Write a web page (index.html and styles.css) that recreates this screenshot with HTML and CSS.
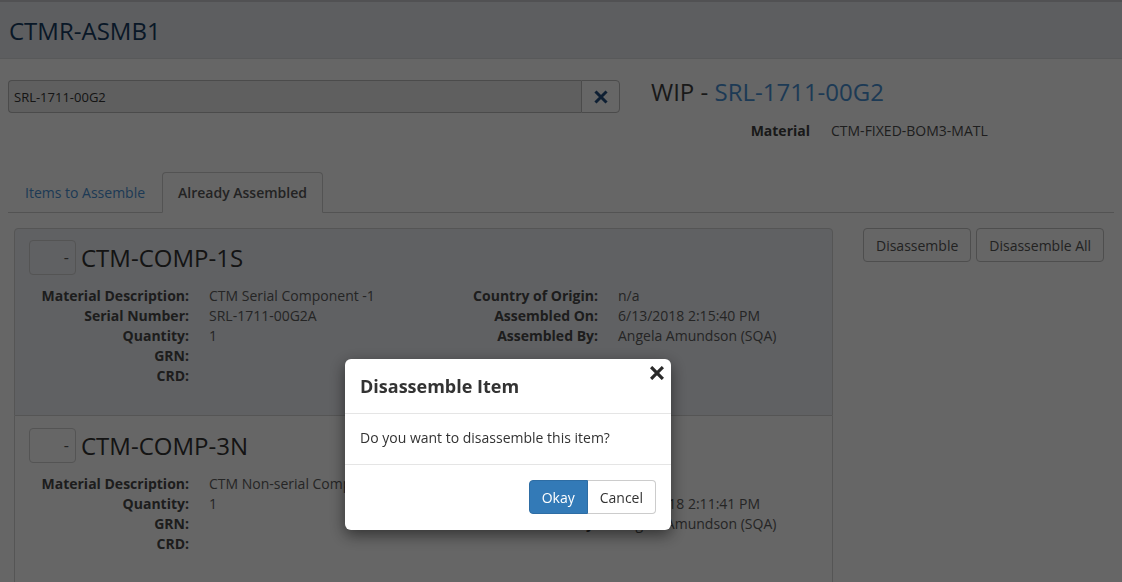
FILE: index.html
```html
<!DOCTYPE html>
<html>
<head>
<meta charset="utf-8">
<title>CTMR-ASMB1</title>
<link rel="stylesheet" href="styles.css">
</head>
<body>
<header class="app-header">
  <h1 class="app-title">CTMR-ASMB1</h1>
</header>
<main class="page">
  <section class="top-row">
    <div class="search-group">
      <input class="search-input" type="text" value="SRL-1711-00G2" readonly>
      <button class="search-clear" type="button" aria-label="Clear">
        <svg width="14" height="14" viewBox="0 0 14 14"><path d="M2.5 2.5 L11.5 11.5 M11.5 2.5 L2.5 11.5" stroke="currentColor" stroke-width="3" stroke-linecap="square"/></svg>
      </button>
    </div>
    <div class="wip">
      <h2 class="wip-title">WIP - <a class="link">SRL-1711-00G2</a></h2>
      <dl class="wip-meta">
        <dt>Material</dt>
        <dd>CTM-FIXED-BOM3-MATL</dd>
      </dl>
    </div>
  </section>

  <nav class="tabs">
    <a class="tab">Items to Assemble</a>
    <a class="tab active">Already Assembled</a>
  </nav>

  <section class="tab-body">
    <div class="cards">
      <article class="card selected">
        <div class="card-head">
          <span class="pick">-</span>
          <h3 class="card-title">CTM-COMP-1S</h3>
        </div>
        <div class="fields">
          <dl class="dl">
            <dt>Material Description:</dt><dd>CTM Serial Component -1</dd>
            <dt>Serial Number:</dt><dd>SRL-1711-00G2A</dd>
            <dt>Quantity:</dt><dd>1</dd>
            <dt>GRN:</dt><dd></dd>
            <dt>CRD:</dt><dd></dd>
          </dl>
          <dl class="dl">
            <dt>Country of Origin:</dt><dd>n/a</dd>
            <dt>Assembled On:</dt><dd>6/13/2018 2:15:40 PM</dd>
            <dt>Assembled By:</dt><dd>Angela Amundson (SQA)</dd>
          </dl>
        </div>
      </article>
      <article class="card">
        <div class="card-head">
          <span class="pick">-</span>
          <h3 class="card-title">CTM-COMP-3N</h3>
        </div>
        <div class="fields">
          <dl class="dl">
            <dt>Material Description:</dt><dd>CTM Non-serial Component -3</dd>
            <dt>Quantity:</dt><dd>1</dd>
            <dt>GRN:</dt><dd></dd>
            <dt>CRD:</dt><dd></dd>
          </dl>
          <dl class="dl">
            <dt>Country of Origin:</dt><dd>n/a</dd>
            <dt>Assembled On:</dt><dd>6/13/2018 2:11:41 PM</dd>
            <dt>Assembled By:</dt><dd>Angela Amundson (SQA)</dd>
          </dl>
        </div>
      </article>
    </div>
    <div class="actions">
      <button class="btn" type="button">Disassemble</button>
      <button class="btn" type="button">Disassemble All</button>
    </div>
  </section>
</main>

<div class="backdrop"></div>
<div class="modal" role="dialog">
  <div class="modal-header">
    <h4 class="modal-title">Disassemble Item</h4>
    <button class="modal-close" type="button" aria-label="Close">
      <svg width="14" height="14" viewBox="0 0 14 14"><path d="M2.2 2.2 L11.8 11.8 M11.8 2.2 L2.2 11.8" stroke="currentColor" stroke-width="3.2" stroke-linecap="square"/></svg>
    </button>
  </div>
  <div class="modal-body">Do you want to disassemble this item?</div>
  <div class="modal-footer">
    <div class="btn-group">
      <button class="mbtn primary" type="button">Okay</button>
      <button class="mbtn" type="button">Cancel</button>
    </div>
  </div>
</div>
</body>
</html>
```

FILE: styles.css
```css
* { box-sizing: border-box; }
html, body { margin: 0; padding: 0; }
body {
  font-family: "Open Sans", "Liberation Sans", sans-serif;
  font-size: 14px;
  line-height: 20px;
  color: #333;
  background: #cccccc;
  height: 582px;
  overflow: hidden;
}

.app-header {
  height: 59px;
  background: #babcc0;
  border-top: 2px solid #a2a3a6;
  border-bottom: 1px solid #b0b2b5;
  padding-left: 9px;
  display: flex;
  align-items: center;
}
.app-title {
  margin: 0;
  font-size: 24px;
  font-weight: 400;
  color: #12304e;
  line-height: 30px;
  padding-top: 1px;
}

.page { padding: 0 8px; }

.top-row {
  display: flex;
  margin-top: 21px;
  height: 92px;
}
.search-group {
  display: flex;
  width: 612px;
  height: 33px;
}
.search-input {
  flex: 1;
  min-width: 0;
  height: 33px;
  border: 1px solid #969696;
  border-right: none;
  border-radius: 4px 0 0 4px;
  background: #bebebe;
  font-family: inherit;
  font-size: 13px;
  color: #2a2a2a;
  padding: 0 5px;
  outline: none;
}
.search-clear {
  width: 39px;
  height: 33px;
  border: 1px solid #969696;
  border-radius: 0 4px 4px 0;
  background: #cccccc;
  color: #1c3f66;
  display: flex;
  align-items: center;
  justify-content: center;
  padding: 0;
}
.wip { margin-left: 31px; margin-top: -2px; }
.wip-title {
  margin: 0;
  font-size: 24px;
  font-weight: 400;
  line-height: 28px;
  color: #333;
}
.link { color: #3a74aa; text-decoration: none; }
.wip-meta {
  display: grid;
  grid-template-columns: 159px auto;
  column-gap: 21px;
  margin: 15px 0 0;
  font-size: 14px;
}
.wip-meta dt { font-weight: 700; text-align: right; color: #333; }
.wip-meta dd { margin: 0; color: #3c3c3c; }

.tabs {
  display: flex;
  border-bottom: 1px solid #a6a6a6;
  height: 41px;
}
.tab {
  display: block;
  padding: 10px 15px;
  line-height: 20px;
  height: 41px;
  border: 1px solid transparent;
  border-radius: 4px 4px 0 0;
  color: #3a74aa;
  margin-right: 1px;
}
.tab:first-child { margin-left: 1px; }
.tab.active {
  color: #474747;
  font-weight: 600;
  border-color: #a6a6a6;
  border-bottom-color: #cccccc;
  background: #cccccc;
}

.tab-body {
  display: flex;
  align-items: flex-start;
  padding-top: 15px;
  padding-left: 6px;
}
.cards { width: 819px; }
.card {
  border: 1px solid #aaaaaa;
  background: #cccccc;
  padding: 11px 14px 29px;
}
.card + .card { border-top: none; padding-top: 12px; }
.card.selected { background: #c0c2c6; border-radius: 4px 4px 0 0; }
.card-head {
  display: flex;
  align-items: center;
  gap: 5px;
}
.pick {
  width: 47px;
  height: 35px;
  border: 1px solid #a8a8a8;
  border-radius: 4px;
  text-align: right;
  padding-right: 6px;
  line-height: 33px;
  font-size: 16px;
  color: #444;
}
.card-title {
  margin: 0;
  font-size: 24px;
  font-weight: 400;
  color: #282828;
  line-height: 30px;
}
.fields {
  display: grid;
  grid-template-columns: 409px 1fr;
  margin-top: 11px;
}
.dl {
  display: grid;
  grid-template-columns: 160px 1fr;
  column-gap: 20px;
  margin: 0;
  grid-auto-rows: 20px;
  font-size: 14px;
}
.dl dt { font-weight: 700; text-align: right; color: #3a3a3a; white-space: nowrap; }
.dl dd { margin: 0; color: #4a4a4a; white-space: nowrap; }

.actions {
  display: flex;
  gap: 5px;
  margin-left: 30px;
}
.btn {
  font-family: inherit;
  font-size: 14px;
  height: 34px;
  padding: 0 12px;
  border: 1px solid #9c9c9c;
  border-radius: 4px;
  background: #cccccc;
  color: #454545;
}

.backdrop {
  position: fixed;
  inset: 0;
  background: rgba(0, 0, 0, 0.5);
}
.modal {
  position: fixed;
  left: 345px;
  top: 359px;
  width: 326px;
  background: #fff;
  border-radius: 6px;
  box-shadow: 0 5px 15px rgba(0, 0, 0, 0.5);
}
.modal-header {
  position: relative;
  padding: 15px;
  border-bottom: 1px solid #e5e5e5;
  height: 55px;
}
.modal-title {
  margin: 0;
  font-size: 18px;
  font-weight: 700;
  line-height: 25px;
  color: #333;
}
.modal-close {
  position: absolute;
  right: 7px;
  top: 7px;
  border: none;
  background: none;
  padding: 0;
  color: #2a2a2a;
  width: 14px;
  height: 14px;
  display: flex;
}
.modal-body {
  padding: 14px 15px 0;
  font-size: 14px;
  height: 50px;
  line-height: 20px;
}
.modal-footer {
  border-top: 1px solid #e5e5e5;
  padding: 15px;
  display: flex;
  justify-content: flex-end;
  height: 66px;
}
.btn-group { display: flex; }
.mbtn {
  font-family: inherit;
  font-size: 14px;
  height: 34px;
  padding: 0 12px;
  border: 1px solid #ccc;
  border-left: none;
  background: #fff;
  color: #333;
  border-radius: 0 4px 4px 0;
}
.mbtn.primary {
  background: #337ab7;
  border: 1px solid #2e6da4;
  color: #fff;
  border-radius: 4px 0 0 4px;
}
```
